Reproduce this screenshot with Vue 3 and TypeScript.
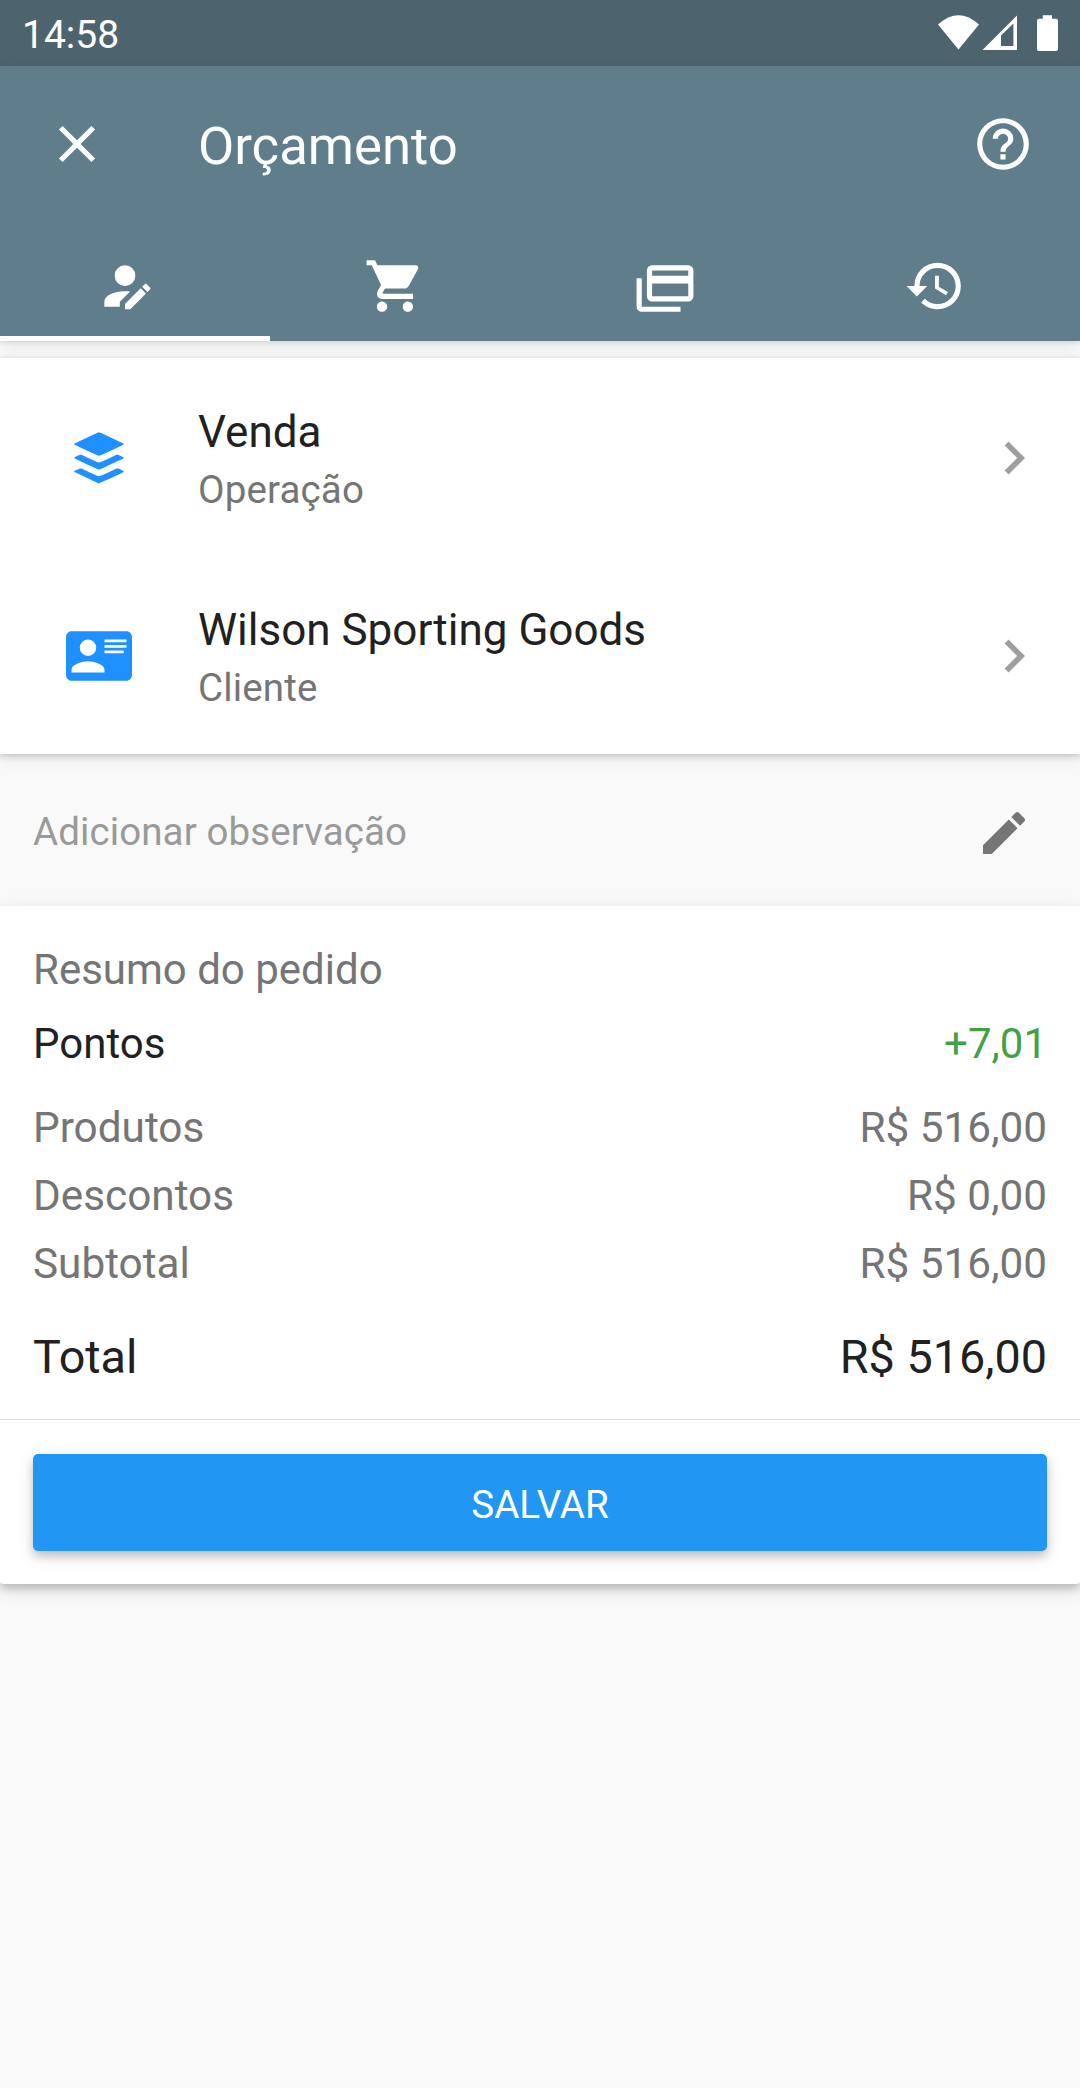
<script setup lang="ts">
import { ref } from 'vue'

interface Tab {
  id: string
  path: string
}

interface OrderField {
  title: string
  subtitle: string
  icon: string
}

interface SummaryLine {
  label: string
  value: string
  kind: 'points' | 'muted' | 'total'
  first?: boolean
}

const activeTab = ref('customer')

const icons = {
  close:
    'M19,6.41L17.59,5L12,10.59L6.41,5L5,6.41L10.59,12L5,17.59L6.41,19L12,13.41L17.59,19L19,17.59L13.41,12L19,6.41Z',
  help: 'M11,18H13V16H11V18M12,2A10,10 0 0,0 2,12A10,10 0 0,0 12,22A10,10 0 0,0 22,12A10,10 0 0,0 12,2M12,20C7.59,20 4,16.41 4,12C4,7.59 7.59,4 12,4C16.41,4 20,7.59 20,12C20,16.41 16.41,20 12,20M12,6A4,4 0 0,0 8,10H10A2,2 0 0,1 12,8A2,2 0 0,1 14,10C14,12 11,11.75 11,15H13C13,12.75 16,12.5 16,10A4,4 0 0,0 12,6Z',
  chevron: 'M8.59,16.58L13.17,12L8.59,7.41L10,6L16,12L10,18L8.59,16.58Z',
  pencil:
    'M20.71,7.04C21.1,6.65 21.1,6 20.71,5.63L18.37,3.29C18,2.9 17.35,2.9 16.96,3.29L15.12,5.12L18.87,8.87M3,17.25V21H6.75L17.81,9.93L14.06,6.18L3,17.25Z',
  buffer:
    'M12.6,2.86C15.27,4.1 18,5.39 20.66,6.63C20.81,6.7 21,6.75 21,6.95C21,7.15 20.81,7.19 20.66,7.26C18,8.5 15.3,9.77 12.62,11C12.21,11.21 11.79,11.21 11.38,11C8.69,9.76 6,8.5 3.32,7.25C3.18,7.19 3,7.14 3,6.94C3,6.76 3.18,6.71 3.31,6.65C6,5.39 8.74,4.1 11.44,2.85C11.73,2.72 12.3,2.73 12.6,2.86M12,21.15C11.8,21.15 11.66,21.11 11.38,20.97C8.69,19.73 6,18.47 3.33,17.22C3.19,17.15 3,17.11 3,16.9C3,16.7 3.19,16.66 3.34,16.59C3.78,16.38 4.23,16.17 4.67,15.96C5.12,15.76 5.56,15.76 6,15.97C7.79,16.8 9.57,17.63 11.35,18.46C11.79,18.67 12.23,18.66 12.67,18.46C14.45,17.62 16.23,16.79 18,15.96C18.44,15.76 18.87,15.75 19.29,15.95C19.77,16.16 20.24,16.39 20.71,16.61C20.78,16.64 20.85,16.68 20.91,16.73C21.04,16.83 21.04,17 20.91,17.08C20.83,17.14 20.74,17.19 20.65,17.23C18,18.5 15.33,19.72 12.66,20.95C12.46,21.05 12.19,21.15 12,21.15M12,16.17C11.9,16.17 11.55,16.07 11.36,16C8.68,14.74 6,13.5 3.34,12.24C3.2,12.18 3,12.13 3,11.93C3,11.72 3.2,11.68 3.35,11.61C3.8,11.39 4.25,11.18 4.7,10.97C5.13,10.78 5.56,10.78 6,11C7.78,11.82 9.55,12.65 11.33,13.48C11.79,13.69 12.25,13.69 12.7,13.47C14.46,12.64 16.22,11.82 18,11C18.44,10.78 18.88,10.78 19.32,10.98C19.8,11.19 20.26,11.41 20.73,11.64C20.8,11.67 20.86,11.71 20.92,11.75C21.04,11.85 21.04,12.03 20.92,12.11C20.85,12.17 20.76,12.21 20.68,12.25C18,13.5 15.34,14.73 12.67,15.97C12.47,16.06 12.1,16.17 12,16.17Z',
  contact:
    'M2,3H22C23.05,3 24,3.95 24,5V19C24,20.05 23.05,21 22,21H2C0.95,21 0,20.05 0,19V5C0,3.95 0.95,3 2,3M14,6V7H22V6H14M14,8V9H21.5L22,9V8H14M14,10V11H21V10H14M8,13.91C6,13.91 2,15 2,17V18H14V17C14,15 10,13.91 8,13.91M8,6A3,3 0 0,0 5,9A3,3 0 0,0 8,12A3,3 0 0,0 11,9A3,3 0 0,0 8,6Z',
}

const tabs: Tab[] = [
  {
    id: 'customer',
    path: 'M21.7,13.35L20.7,14.35L18.65,12.3L19.65,11.3C19.86,11.09 20.21,11.09 20.42,11.3L21.7,12.58C21.91,12.79 21.91,13.14 21.7,13.35M12,18.94V21H14.06L20.12,14.88L18.07,12.83L12,18.94M12,14C7.58,14 4,15.79 4,18V20H10V18.11L14,14.11C13.34,14.03 12.67,14 12,14M12,4A4,4 0 0,0 8,8A4,4 0 0,0 12,12A4,4 0 0,0 16,8A4,4 0 0,0 12,4Z',
  },
  {
    id: 'cart',
    path: 'M17,18A2,2 0 0,1 19,20A2,2 0 0,1 17,22C15.89,22 15,21.1 15,20C15,18.89 15.89,18 17,18M1,2H4.27L5.21,4H20A1,1 0 0,1 21,5C21,5.17 20.95,5.34 20.88,5.5L17.3,11.97C16.96,12.58 16.3,13 15.55,13H8.1L7.2,14.63L7.17,14.75A0.25,0.25 0 0,0 7.42,15H19V17H7C5.89,17 5,16.1 5,15C5,14.65 5.09,14.32 5.24,14.04L6.6,11.59L3,4H1V2M7,18A2,2 0 0,1 9,20A2,2 0 0,1 7,22C5.89,22 5,21.1 5,20C5,18.89 5.89,18 7,18Z',
  },
  {
    id: 'payment',
    path: 'M21,4H7A2,2 0 0,0 5,6V16A2,2 0 0,0 7,18H21A2,2 0 0,0 23,16V6A2,2 0 0,0 21,4M21,16H7V11H21V16M21,8H7V6H21V8M3,20H18V22H3A2,2 0 0,1 1,20V9H3V20Z',
  },
  {
    id: 'history',
    path: 'M13.5,8H12V13L16.28,15.54L17,14.33L13.5,12.25V8M13,3A9,9 0 0,0 4,12H1L4.96,16.03L9,12H6A7,7 0 0,1 13,5A7,7 0 0,1 20,12A7,7 0 0,1 13,19C11.07,19 9.32,18.21 8.06,16.94L6.64,18.36C8.27,20 10.5,21 13,21A9,9 0 0,0 22,12A9,9 0 0,0 13,3',
  },
]

const fields: OrderField[] = [
  { title: 'Venda', subtitle: 'Operação', icon: icons.buffer },
  { title: 'Wilson Sporting Goods', subtitle: 'Cliente', icon: icons.contact },
]

const lines: SummaryLine[] = [
  { label: 'Pontos', value: '+7,01', kind: 'points' },
  { label: 'Produtos', value: 'R$ 516,00', kind: 'muted', first: true },
  { label: 'Descontos', value: 'R$ 0,00', kind: 'muted' },
  { label: 'Subtotal', value: 'R$ 516,00', kind: 'muted' },
  { label: 'Total', value: 'R$ 516,00', kind: 'total' },
]
</script>

<template>
  <div class="screen">
    <div class="status">
      <span class="clock">14:58</span>
      <svg class="signals" viewBox="0 0 130 66" aria-hidden="true">
        <path d="M8,24.6Q28.5,5.8 49,24.6L28.5,49.6Z" />
        <path fill-rule="evenodd" d="M87,15.5V50H52.5ZM83.4,23.6L71,35.6V46H83.4Z" />
        <path d="M112.8,15.3H122V18.8H126Q128,18.8 128,20.8V49Q128,51 126,51H109Q107,51 107,49V20.8Q107,18.8 109,18.8H112.8Z" />
      </svg>
    </div>

    <header class="header">
      <div class="toolbar">
        <button class="icon-button" aria-label="Fechar">
          <svg class="bar-icon" viewBox="0 0 24 24"><path :d="icons.close" /></svg>
        </button>
        <h1 class="title">Orçamento</h1>
        <button class="icon-button" aria-label="Ajuda">
          <svg class="bar-icon" viewBox="0 0 24 24"><path :d="icons.help" /></svg>
        </button>
      </div>
      <nav class="tabs">
        <button
          v-for="tab in tabs"
          :key="tab.id"
          class="tab"
          :class="{ active: tab.id === activeTab }"
          :aria-label="tab.id"
          @click="activeTab = tab.id"
        >
          <svg class="bar-icon" viewBox="0 0 24 24"><path :d="tab.path" /></svg>
        </button>
      </nav>
    </header>

    <section class="fields">
      <div v-for="field in fields" :key="field.title" class="field">
        <svg class="field-icon" viewBox="0 0 24 24"><path :d="field.icon" /></svg>
        <div class="field-text">
          <div class="field-title">{{ field.title }}</div>
          <div class="field-subtitle">{{ field.subtitle }}</div>
        </div>
        <svg class="chevron" viewBox="0 0 24 24"><path :d="icons.chevron" /></svg>
      </div>
    </section>

    <div class="note">
      <span>Adicionar observação</span>
      <svg class="pencil" viewBox="0 0 24 24"><path :d="icons.pencil" /></svg>
    </div>

    <section class="summary">
      <h2 class="summary-title">Resumo do pedido</h2>
      <div
        v-for="line in lines"
        :key="line.label"
        class="line"
        :class="[line.kind, { first: line.first }]"
      >
        <span>{{ line.label }}</span>
        <span class="value">{{ line.value }}</span>
      </div>
      <div class="actions">
        <button class="save">SALVAR</button>
      </div>
    </section>
  </div>
</template>

<style>
body {
  margin: 0;
  background: #f9f9f9;
}
</style>

<style scoped>
.screen {
  width: 1080px;
  min-height: 2088px;
  background: #f9f9f9;
  color: #212121;
  font-family: Roboto, sans-serif;
  overflow: hidden;
}

svg {
  display: block;
  flex: none;
  fill: currentColor;
}

button {
  border: 0;
  padding: 0;
  background: none;
  color: inherit;
  font: inherit;
}

h1,
h2 {
  margin: 0;
  font-weight: 400;
}

.status {
  display: flex;
  align-items: flex-start;
  justify-content: space-between;
  height: 66px;
  padding: 0 20px 0 22px;
  box-sizing: border-box;
  background: #4d646f;
  color: #fff;
}

.clock {
  margin-top: 12px;
  font-size: 39px;
  line-height: 46px;
}

.signals {
  width: 130px;
  height: 66px;
}

.header {
  position: relative;
  z-index: 1;
  height: 275px;
  background: #607d8b;
  color: #fff;
  box-shadow: 0 2px 5px rgba(0, 0, 0, 0.1), 0 4px 16px rgba(0, 0, 0, 0.07);
}

.toolbar {
  display: flex;
  align-items: center;
  height: 156px;
  padding: 0 46px;
}

.bar-icon {
  width: 62px;
  height: 62px;
}

.title {
  flex: 1;
  margin-left: 90px;
  padding-top: 4px;
  font-size: 52.7px;
  line-height: 62px;
}

.tabs {
  display: flex;
  height: 119px;
}

.tab {
  flex: 1;
  display: flex;
  align-items: flex-start;
  justify-content: center;
  box-sizing: border-box;
  height: 119px;
  padding: 33px 21px 0 0;
  border-bottom: 5px solid transparent;
}

.tab.active {
  border-bottom-color: #fff;
}

.fields {
  margin-top: 17px;
  background: #fff;
  box-shadow: 0 2px 6px rgba(0, 0, 0, 0.17), 0 3px 16px rgba(0, 0, 0, 0.1);
}

.field {
  display: flex;
  align-items: center;
  box-sizing: border-box;
  height: 198px;
  padding: 2px 33px 0 66px;
}

.field-icon {
  width: 66px;
  height: 66px;
  color: #1e90ff;
}

.field-text {
  flex: 1;
  margin-left: 66px;
  padding-top: 2px;
}

.field-title {
  font-size: 44px;
  line-height: 52px;
}

.field-subtitle {
  margin-top: 9px;
  color: #757575;
  font-size: 38.5px;
  line-height: 45px;
  letter-spacing: 0.15px;
}

.chevron {
  width: 66px;
  height: 66px;
  color: #9e9e9e;
}

.note {
  display: flex;
  align-items: center;
  justify-content: space-between;
  height: 152px;
  padding: 0 48px 0 33px;
  color: #9a9a9a;
  font-size: 38.5px;
  line-height: 45px;
  letter-spacing: 0.1px;
}

.note span {
  padding-top: 3px;
}

.pencil {
  width: 56px;
  height: 56px;
  margin-top: 5px;
  color: #757575;
}

.summary {
  padding-top: 39px;
  background: #fff;
  border-radius: 0 0 6px 6px / 0 0 2px 2px;
  box-shadow: 0 5px 7px rgba(0, 0, 0, 0.17), 0 6px 20px rgba(0, 0, 0, 0.12);
}

.summary-title {
  margin-left: 33px;
  color: #757575;
  font-size: 42px;
  line-height: 49px;
}

.line {
  display: flex;
  justify-content: space-between;
  margin: 19px 33px 0;
  font-size: 42.3px;
  line-height: 49px;
}

.line.points {
  margin-top: 25px;
  font-size: 42px;
}

.points .value {
  color: #43a047;
}

.line.muted {
  color: #757575;
}

.line.first {
  margin-top: 35px;
}

.line.total {
  margin-top: 42px;
  font-size: 46.75px;
  line-height: 54px;
}

.actions {
  margin-top: 35px;
  padding: 34px 33px 33px;
  border-top: 1px solid #dedede;
}

.save {
  display: block;
  box-sizing: border-box;
  width: 100%;
  height: 97px;
  padding-top: 4px;
  border-radius: 5px;
  background: #2196f3;
  color: #fff;
  font-size: 38.5px;
  line-height: 45px;
  box-shadow: 0 5px 8px rgba(0, 0, 0, 0.17), 0 6px 18px rgba(0, 0, 0, 0.12);
}
</style>
